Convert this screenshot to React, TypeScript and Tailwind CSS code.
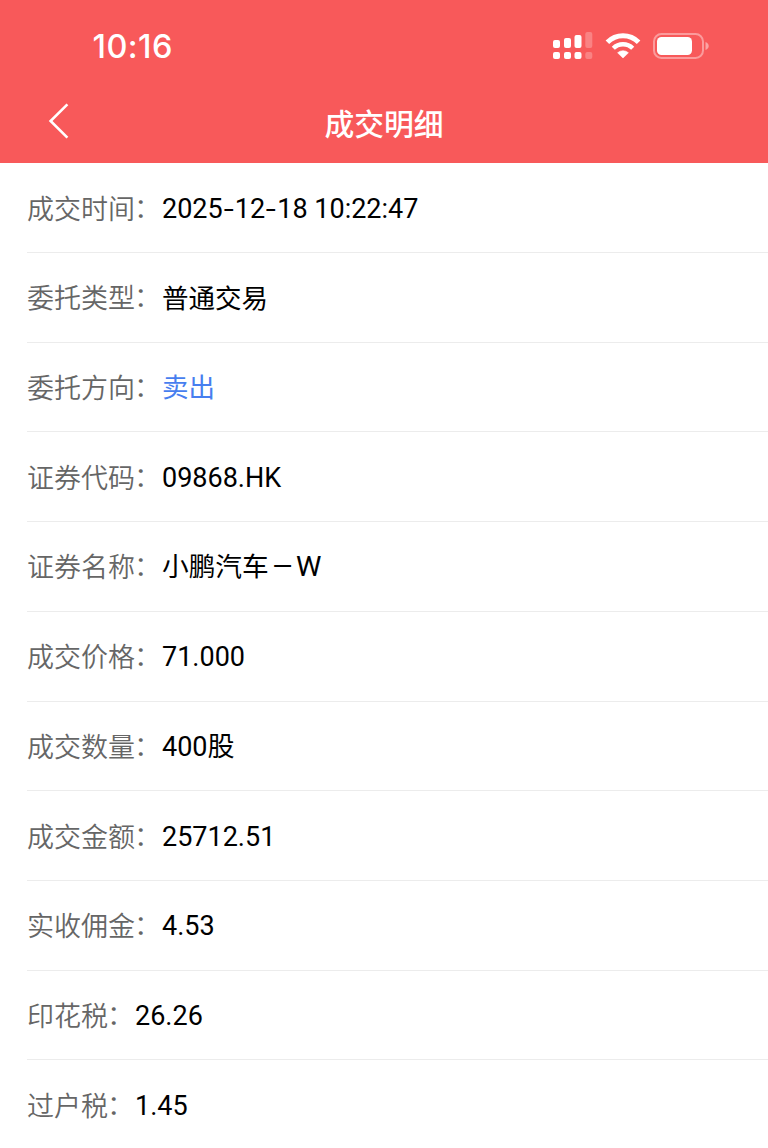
import { ReactNode } from "react";
import clsx from "clsx";

type Row = {
  label: string;
  value: ReactNode;
  className?: string;
};

// The hyphen in this face is narrow, so it gets a wider cell of its own
function Dash() {
  return (
    <span className="inline-block w-[12.1px] text-center">
      <span className="inline-block scale-x-[1.35]">-</span>
    </span>
  );
}

const stockName = (
  <>
    <span className="text-[26.7px]">小鹏汽车</span>
    <span className="inline-block origin-center scale-x-[0.86]">－</span>
    <span className="inline-block origin-left scale-x-[1.06]">W</span>
  </>
);

const rows: Row[] = [
  { label: "成交时间", value: <>2025<Dash />12<Dash />18 10:22:47</> },
  { label: "委托类型", value: "普通交易", className: "text-[26.5px] text-black" },
  { label: "委托方向", value: "卖出", className: "text-[26.5px] text-[#477eef]" },
  { label: "证券代码", value: "09868.HK" },
  { label: "证券名称", value: stockName },
  { label: "成交价格", value: "71.000" },
  { label: "成交数量", value: "400股" },
  { label: "成交金额", value: "25712.51" },
  { label: "实收佣金", value: "4.53" },
  { label: "印花税", value: "26.26" },
  { label: "过户税", value: "1.45" },
];

function SignalIcon() {
  return (
    <svg width="40" height="28" viewBox="0 0 40 28" fill="white">
      <rect x="0" y="8" width="7" height="8" rx="2" />
      <rect x="11" y="6" width="7" height="10" rx="2" />
      <rect x="21.5" y="3" width="7" height="13" rx="2" />
      <rect x="32.3" y="0" width="7" height="16" rx="2" opacity="0.25" />
      <rect x="0" y="20" width="7" height="7" rx="2" />
      <rect x="11" y="20" width="7" height="7" rx="2" />
      <rect x="21.5" y="20" width="7" height="7" rx="2" />
      <rect x="32.3" y="20" width="7" height="7" rx="2" opacity="0.25" />
    </svg>
  );
}

function WifiIcon() {
  return (
    <svg width="36" height="26" viewBox="0 0 36 26" fill="none">
      <path d="M2.4 9.2 A22 22 0 0 1 33.6 9.2" stroke="white" strokeWidth="5" />
      <path d="M8.3 15.2 A13.8 13.8 0 0 1 27.7 15.2" stroke="white" strokeWidth="4.4" />
      <path d="M18 25 L12.6 19.8 A8 8 0 0 1 23.4 19.8 Z" fill="white" stroke="white" strokeWidth="0.6" strokeLinejoin="round" />
    </svg>
  );
}

function BatteryIcon() {
  return (
    <svg width="57" height="26" viewBox="0 0 57 26" fill="none">
      <rect x="1" y="1" width="49" height="24" rx="7.5" stroke="white" strokeOpacity="0.4" strokeWidth="2" />
      <rect x="4" y="4" width="35" height="18" rx="4.5" fill="white" />
      <path d="M52.5 9 C56.8 10.4 56.8 15.6 52.5 17 Z" fill="white" opacity="0.45" />
    </svg>
  );
}

export default function App() {
  return (
    <div className="h-[1148px] w-full overflow-hidden bg-white font-['Roboto','Noto_Sans_CJK_SC',sans-serif]">
      <header className="h-[163.4px] bg-[#f8595a] text-white">
        {/* Status bar */}
        <div className="flex h-[91px] items-center justify-between pl-[92.5px] pr-[58px]">
          <span className="pt-[4px] font-['Inter',sans-serif] text-[32.5px] font-[550] leading-none tracking-[0.4px]">10:16</span>
          <div className="flex items-center">
            <SignalIcon />
            <div className="ml-[12px] mr-[12px]">
              <WifiIcon />
            </div>
            <BatteryIcon />
          </div>
        </div>

        {/* Title bar */}
        <div className="grid h-[64px] grid-cols-[1fr_auto_1fr] items-center">
          <button className="justify-self-start pb-[5px] pl-[48px]" aria-label="返回">
            <svg width="22" height="36" viewBox="0 0 22 36" fill="none" stroke="white" strokeWidth="2.6">
              <path d="M19.4 1.4 L2.6 18 L19.4 34.6" />
            </svg>
          </button>
          <h1 className="pt-[4px] text-[29.8px] font-medium leading-none">成交明细</h1>
        </div>
      </header>

      <main className="pl-[27px]">
        {rows.map((row) => (
          <div key={row.label} className="flex h-[89.7px] items-center border-b border-[#ececec] text-[27px] leading-none">
            <span className="pt-[5px] font-[350] text-[#666666]">
              {row.label}
              <span className="relative -left-px -top-px">：</span>
            </span>
            <span className={clsx("pt-[3px]", row.className ?? "text-black")}>{row.value}</span>
          </div>
        ))}
      </main>
    </div>
  );
}
